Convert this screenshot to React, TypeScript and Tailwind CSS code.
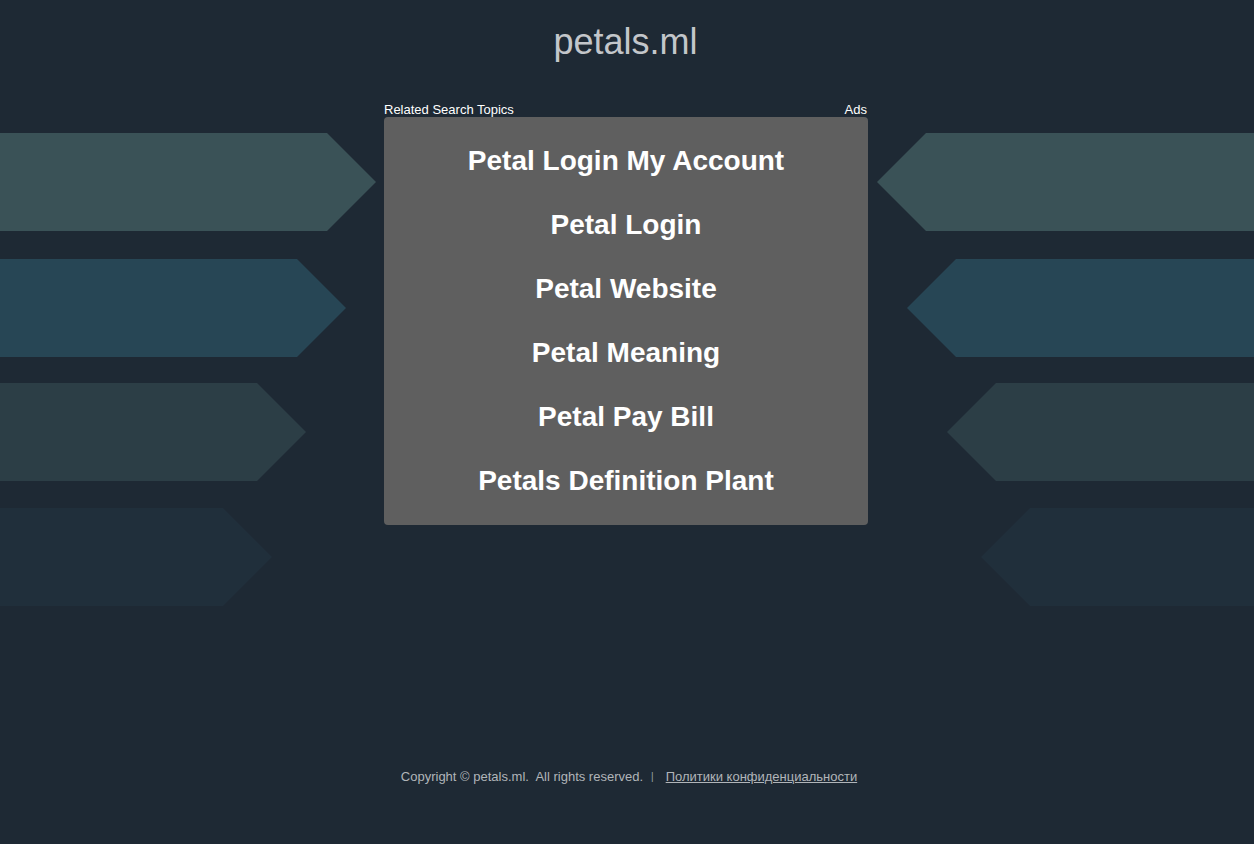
const topics = [
  "Petal Login My Account",
  "Petal Login",
  "Petal Website",
  "Petal Meaning",
  "Petal Pay Bill",
  "Petals Definition Plant",
];

const leftArrows = [
  { w: 376, color: "#3a5257", gap: "mt-0" },
  { w: 346, color: "#274655", gap: "mt-[28px]" },
  { w: 306, color: "#2c3e46", gap: "mt-[26px]" },
  { w: 272, color: "#202f3b", gap: "mt-[27px]" },
];

const rightArrows = [
  { w: 377, color: "#3a5257", gap: "mt-0" },
  { w: 347, color: "#274655", gap: "mt-[28px]" },
  { w: 307, color: "#2c3e46", gap: "mt-[26px]" },
  { w: 273, color: "#202f3b", gap: "mt-[27px]" },
];

const Arrow = ({ w, color, dir, className }: { w: number; color: string; dir: "left" | "right"; className?: string }) => {
  const h = 98;
  const tip = 49;
  const points =
    dir === "right"
      ? `0,0 ${w - tip},0 ${w},${h / 2} ${w - tip},${h} 0,${h}`
      : `${tip},0 ${w},0 ${w},${h} ${tip},${h} 0,${h / 2}`;
  return (
    <svg width={w} height={h} viewBox={`0 0 ${w} ${h}`} className={"block shrink-0 " + (className ?? "")}>
      <polygon points={points} fill={color} />
    </svg>
  );
};

export default function App() {
  return (
    <div
      className="min-h-screen w-full bg-[#1e2934] text-white overflow-hidden"
      style={{ fontFamily: '"Liberation Sans", Arial, sans-serif' }}
    >
      <header className="pt-5 text-center">
        <h1 className="pr-[3px] text-[36px] leading-[44px] text-[#c3c6ca]">petals.ml</h1>
      </header>

      <main className="mt-[37px] grid grid-cols-[384px_484px_1fr]">
        <div className="flex flex-col items-start pt-[32px]">
          {leftArrows.map((a) => (
            <Arrow key={a.w} w={a.w} color={a.color} dir="right" className={a.gap} />
          ))}
        </div>

        <section className="flex flex-col">
          <div className="flex h-4 items-end justify-between text-[13px] leading-[15px] text-white">
            <span>Related Search Topics</span>
            <span className="pr-px">Ads</span>
          </div>
          <ul className="rounded-[4px] bg-[#5f5f5f] pt-3 pb-3">
            {topics.map((t) => (
              <li key={t} className="flex h-16 items-center justify-center">
                <a href="#" className="text-[28px] font-bold leading-8 text-white">
                  {t}
                </a>
              </li>
            ))}
          </ul>
        </section>

        <div className="flex flex-col items-end pt-[32px]">
          {rightArrows.map((a) => (
            <Arrow key={a.w} w={a.w} color={a.color} dir="left" className={a.gap} />
          ))}
        </div>
      </main>

      <footer className="mt-[163px] flex items-center justify-center pl-[4px] text-[13px] leading-4 text-[#b1b5b9]">
        <span>Copyright © petals.ml.&nbsp; All rights reserved.</span>
        <span className="ml-[8px] mr-[12px] text-[10px] text-[#9aa0a6]">|</span>
        <a href="#" className="underline">
          Политики конфиденциальности
        </a>
      </footer>
    </div>
  );
}
